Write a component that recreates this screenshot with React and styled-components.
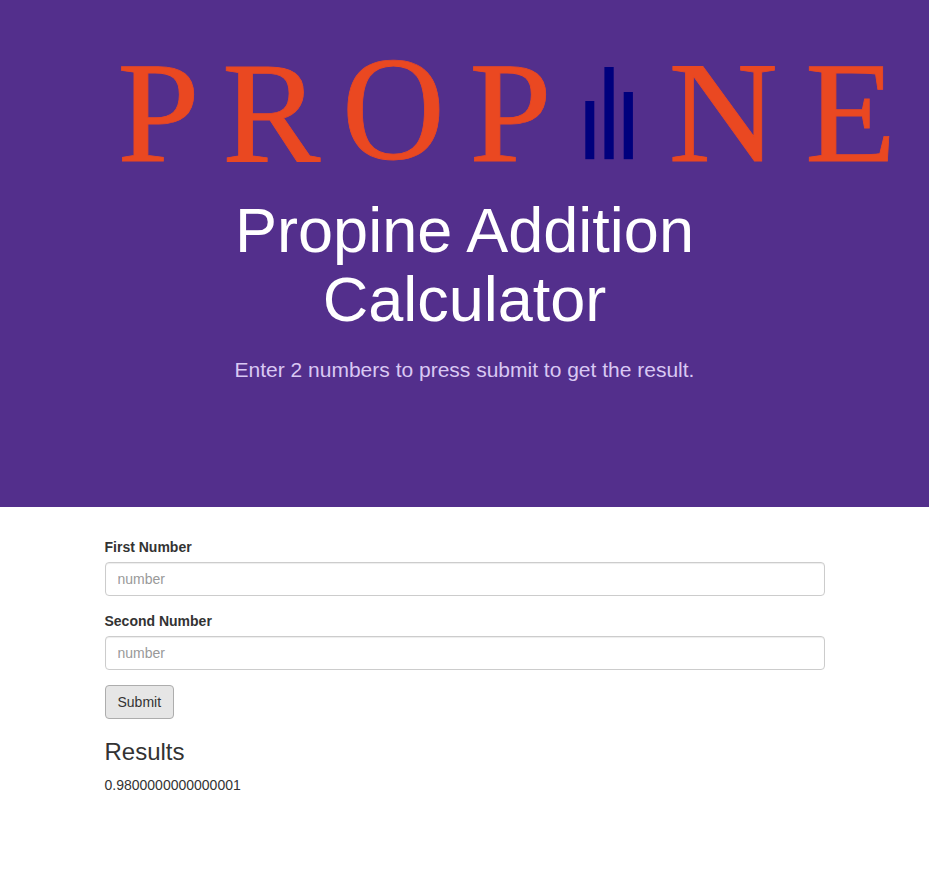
import React from 'react';
import styled, { createGlobalStyle } from 'styled-components';

const GlobalStyle = createGlobalStyle`
  * { box-sizing: border-box; }
  body {
    margin: 0;
    background: #fff;
    color: #333;
    font: 14px/20px "Liberation Sans", Arial, sans-serif;
  }
`;

const Hero = styled.header`
  height: 507px;
  padding-top: 20px;
  background: #532f8c;
  text-align: center;
`;

const Container = styled.div`
  width: 720px;
  margin: 0 auto;
`;

const Logo = styled.svg`
  display: block;
  width: 929px;
  height: 175px;
  font-family: "Liberation Serif", "Times New Roman", serif;
  font-size: 145px;
  fill: #ea4821;
`;

const Letter = styled.text`
  stroke: #ea4821;
  stroke-width: 0.8px;
`;

const Bar = styled.rect`
  fill: #00007d;
`;

const Title = styled.h1`
  margin: 1px 0 20px;
  color: #fff;
  font-size: 63px;
  font-weight: 400;
  line-height: 1.1;
`;

const Lead = styled.p`
  margin: 0;
  color: #d9c8f3;
  font-size: 21px;
  line-height: 30px;
`;

const Form = styled.form`
  padding-top: 30px;
`;

const Field = styled.div`
  margin-bottom: 15px;
`;

const Label = styled.label`
  display: block;
  margin-bottom: 5px;
  font-weight: 700;
`;

const Input = styled.input`
  display: block;
  width: 100%;
  height: 34px;
  padding: 6px 12px;
  border: 1px solid #ccc;
  border-radius: 4px;
  box-shadow: inset 0 1px 1px rgba(0, 0, 0, 0.075);
  background: #fff;
  color: #555;
  font: inherit;

  &::placeholder {
    color: #999;
    opacity: 1;
  }
`;

const Button = styled.button`
  display: block;
  height: 34px;
  padding: 6px 12px;
  border: 1px solid #adadad;
  border-radius: 4px;
  background: #e6e6e6;
  color: #333;
  font: inherit;
`;

const ResultsTitle = styled.h3`
  margin: 20px 0 10px;
  font-size: 24px;
  font-weight: 400;
  line-height: 1.1;
`;

const Result = styled.p`
  margin: 0;
`;

const letters = [
  { char: 'P', x: 117.3, y: 140.5, sx: 1.022, sy: 1 },
  { char: 'R', x: 222.1, y: 140.5, sx: 1.018, sy: 1 },
  { char: 'O', x: 342.1, y: 139.4, sx: 0.982, sy: 1.017 },
  { char: 'P', x: 469.3, y: 140.5, sx: 1.022, sy: 1 },
  { char: 'N', x: 668.4, y: 140.5, sx: 1.045, sy: 1 },
  { char: 'E', x: 805, y: 140.5, sx: 1.03, sy: 1 },
];

const fields = ['First Number', 'Second Number'];

export default function App() {
  return (
    <>
      <GlobalStyle />
      <Hero>
        <Logo viewBox="0 0 929 175" role="img" aria-label="Propine">
          {letters.map(({ char, x, y, sx, sy }) => (
            <Letter key={x} transform={`translate(${x} ${y}) scale(${sx} ${sy})`}>{char}</Letter>
          ))}
          <Bar x="585.3" y="81" width="9" height="58.2" />
          <Bar x="604.4" y="47" width="9.3" height="92.2" />
          <Bar x="623.7" y="72" width="9.2" height="67.2" />
        </Logo>
        <Container>
          <Title>Propine Addition Calculator</Title>
          <Lead>Enter 2 numbers to press submit to get the result.</Lead>
        </Container>
      </Hero>
      <Container>
        <Form onSubmit={(event) => event.preventDefault()}>
          {fields.map((name) => (
            <Field key={name}>
              <Label htmlFor={name}>{name}</Label>
              <Input id={name} placeholder="number" />
            </Field>
          ))}
          <Button type="submit">Submit</Button>
        </Form>
        <ResultsTitle>Results</ResultsTitle>
        <Result>0.9800000000000001</Result>
      </Container>
    </>
  );
}
